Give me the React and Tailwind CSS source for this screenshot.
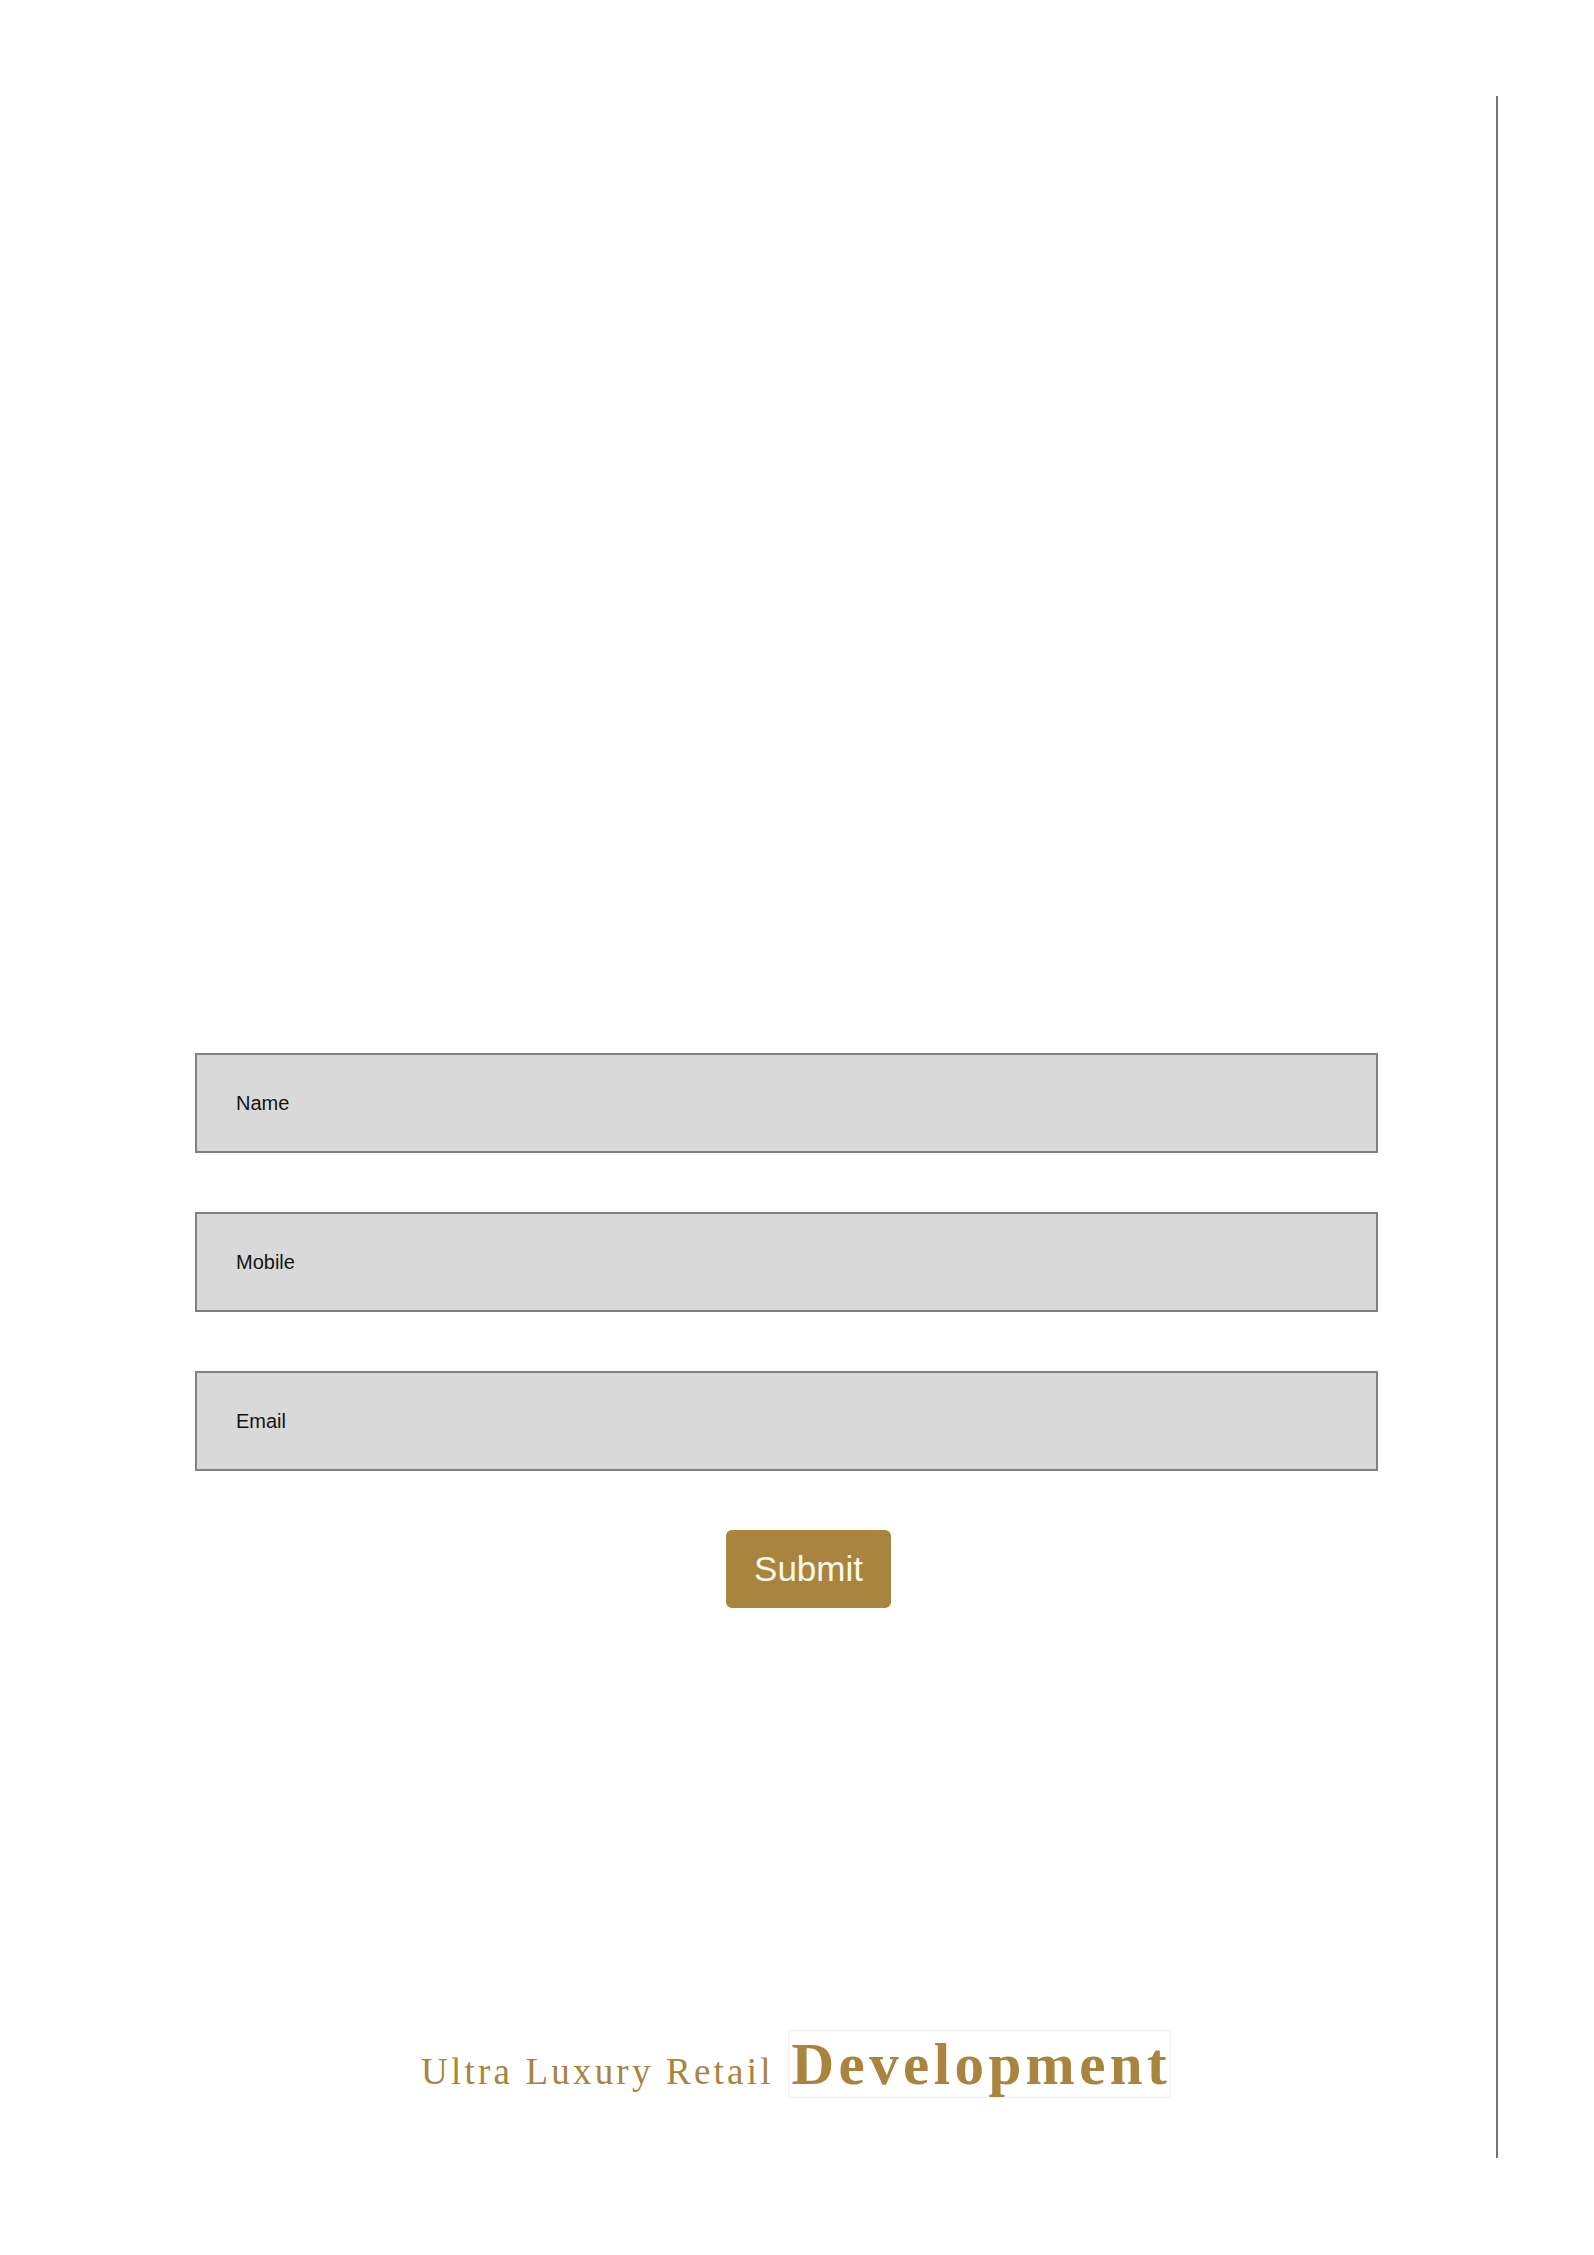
export default function App() {
  const fields = ['Name', 'Mobile', 'Email'];

  return (
    <div className="flex w-[1594px] h-[2255px] bg-white">
      {/* page body */}
      <div className="w-[1496px] shrink-0 pt-[1053px] pl-[195px]">
        <div className="flex flex-col gap-[59px]">
          {fields.map((f) => (
            <div
              key={f}
              className="flex items-center w-[1183px] h-[100px] pl-[39px] bg-[#d9d9d9] border-2 border-[#808080] font-['Liberation_Sans',Arial,sans-serif] text-[20px] text-[#141414]"
            >
              {f}
            </div>
          ))}
        </div>

        <button className="mt-[59px] ml-[531px] flex items-center justify-center w-[165px] h-[78px] rounded-[6px] bg-[#a8843f] font-['Liberation_Sans',Arial,sans-serif] text-[35px] text-[#fdf8ea]">
          Submit
        </button>

        {/* footer tagline */}
        <div className="mt-[422px] ml-[226px] flex items-baseline text-[#a8843f] font-['Liberation_Serif','Times_New_Roman',serif]">
          <span className="text-[37px] leading-none tracking-[3.2px]">Ultra Luxury Retail</span>
          <span className="ml-[14px] inline-block w-[383px] h-[68px] border border-[#f1f1f1] pl-[3px] whitespace-nowrap text-[59px] leading-[66px] font-bold tracking-[4.4px]">
            Development
          </span>
        </div>
      </div>

      {/* right margin rule */}
      <div className="mt-[96px] w-[2px] h-[2062px] bg-[#767676]" />
    </div>
  );
}
